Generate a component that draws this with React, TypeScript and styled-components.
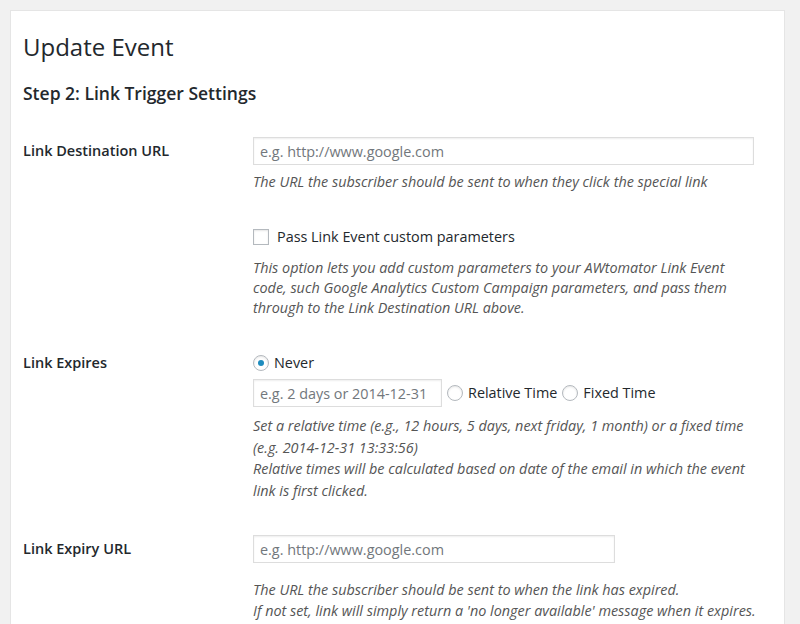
import React from "react";
import styled, { createGlobalStyle } from "styled-components";

const Global = createGlobalStyle`
  html, body { margin: 0; padding: 0; background: #f1f1f1; }
  body { font-family: "Open Sans", "Noto Sans", sans-serif; color: #23282d; overflow: hidden; }
  * { box-sizing: border-box; }
`;

const Page = styled.div`
  padding: 10px 15px 0 10px;
  height: 624px;
  overflow: hidden;
`;

const Panel = styled.div`
  background: #fff;
  border: 1px solid #e5e5e5;
  padding: 21px 12px 40px 12px;
  min-height: 700px;
`;

const Title = styled.h1`
  margin: 0;
  font-size: 24px;
  line-height: 30px;
  font-weight: 400;
  color: #23282d;
`;

const SectionTitle = styled.h3`
  margin: 19px 0 0 0;
  font-size: 17.5px;
  line-height: 24px;
  font-weight: 600;
  color: #23282d;
`;

const Row = styled.div<{ $gap: number }>`
  display: flex;
  margin-top: ${(p) => p.$gap}px;
`;

const Label = styled.div<{ $lh: number }>`
  width: 230px;
  flex: none;
  font-size: 14.5px;
  font-weight: 600;
  line-height: ${(p) => p.$lh}px;
  color: #23282d;
`;

const Body = styled.div`
  flex: 1;
  min-width: 0;
`;

const TextInput = styled.input<{ $w: number }>`
  display: block;
  flex: none;
  width: ${(p) => p.$w}px;
  height: 28px;
  padding: 0 6px;
  border: 1px solid #ddd;
  box-shadow: inset 0 1px 2px rgba(0, 0, 0, 0.07);
  background: #fff;
  font-family: "Open Sans", "Noto Sans", sans-serif;
  font-size: 14.4px;
  color: #32373c;
  outline: none;
  &::placeholder { color: #72777c; }
`;

const Help = styled.p<{ $top: number; $lh: number }>`
  margin: ${(p) => p.$top}px 0 0 0;
  font-size: 14.4px;
  font-style: italic;
  line-height: ${(p) => p.$lh}px;
  color: #555;
`;

const Choice = styled.label`
  display: flex;
  width: fit-content;
  align-items: center;
  height: 20px;
  font-size: 14.4px;
  line-height: 20px;
  color: #23282d;
`;

const Box = styled.span`
  display: block;
  flex: none;
  width: 16px;
  height: 16px;
  border: 1px solid #b4b9be;
  background: #fff;
  box-shadow: inset 0 1px 2px rgba(0, 0, 0, 0.1);
  margin-right: 8px;
`;

const Radio = styled.span<{ $on?: boolean }>`
  display: flex;
  flex: none;
  align-items: center;
  justify-content: center;
  width: 16px;
  height: 16px;
  border-radius: 50%;
  border: 1px solid #b4b9be;
  background: #fff;
  box-shadow: inset 0 1px 2px rgba(0, 0, 0, 0.1);
  margin-right: 5px;
  &::after {
    content: "";
    display: ${(p) => (p.$on ? "block" : "none")};
    width: 6px;
    height: 6px;
    border-radius: 50%;
    background: #1e8cbe;
  }
`;

const InlineGroup = styled.div`
  display: flex;
  align-items: center;
  margin-top: 6px;
  gap: 5px;
`;

export default function App() {
  return (
    <>
      <Global />
      <Page>
        <Panel>
          <Title>Update Event</Title>
          <SectionTitle>Step 2: Link Trigger Settings</SectionTitle>

          <Row $gap={32}>
            <Label $lh={28}>Link Destination URL</Label>
            <Body>
              <TextInput $w={501} placeholder="e.g. http://www.google.com" />
              <Help $top={7} $lh={20}>
                The URL the subscriber should be sent to when they click the special link
              </Help>
            </Body>
          </Row>

          <Row $gap={35}>
            <Label $lh={20} />
            <Body>
              <Choice>
                <Box />
                Pass Link Event custom parameters
              </Choice>
              <Help $top={11} $lh={20}>
                This option lets you add custom parameters to your AWtomator Link Event
                <br />
                code, such Google Analytics Custom Campaign parameters, and pass them
                <br />
                through to the Link Destination URL above.
              </Help>
            </Body>
          </Row>

          <Row $gap={35}>
            <Label $lh={20}>Link Expires</Label>
            <Body>
              <Choice>
                <Radio $on />
                Never
              </Choice>
              <InlineGroup>
                <TextInput $w={189} placeholder="e.g. 2 days or 2014-12-31" />
                <Choice>
                  <Radio />
                  Relative Time
                </Choice>
                <Choice>
                  <Radio />
                  Fixed Time
                </Choice>
              </InlineGroup>
              <Help $top={8} $lh={21.5}>
                Set a relative time (e.g., 12 hours, 5 days, next friday, 1 month) or a fixed time
                <br />
                (e.g. 2014-12-31 13:33:56)
                <br />
                Relative times will be calculated based on date of the email in which the event
                <br />
                link is first clicked.
              </Help>
            </Body>
          </Row>

          <Row $gap={34}>
            <Label $lh={28}>Link Expiry URL</Label>
            <Body>
              <TextInput $w={362} placeholder="e.g. http://www.google.com" />
              <Help $top={16} $lh={21}>
                The URL the subscriber should be sent to when the link has expired.
                <br />
                If not set, link will simply return a 'no longer available' message when it expires.
              </Help>
            </Body>
          </Row>
        </Panel>
      </Page>
    </>
  );
}
